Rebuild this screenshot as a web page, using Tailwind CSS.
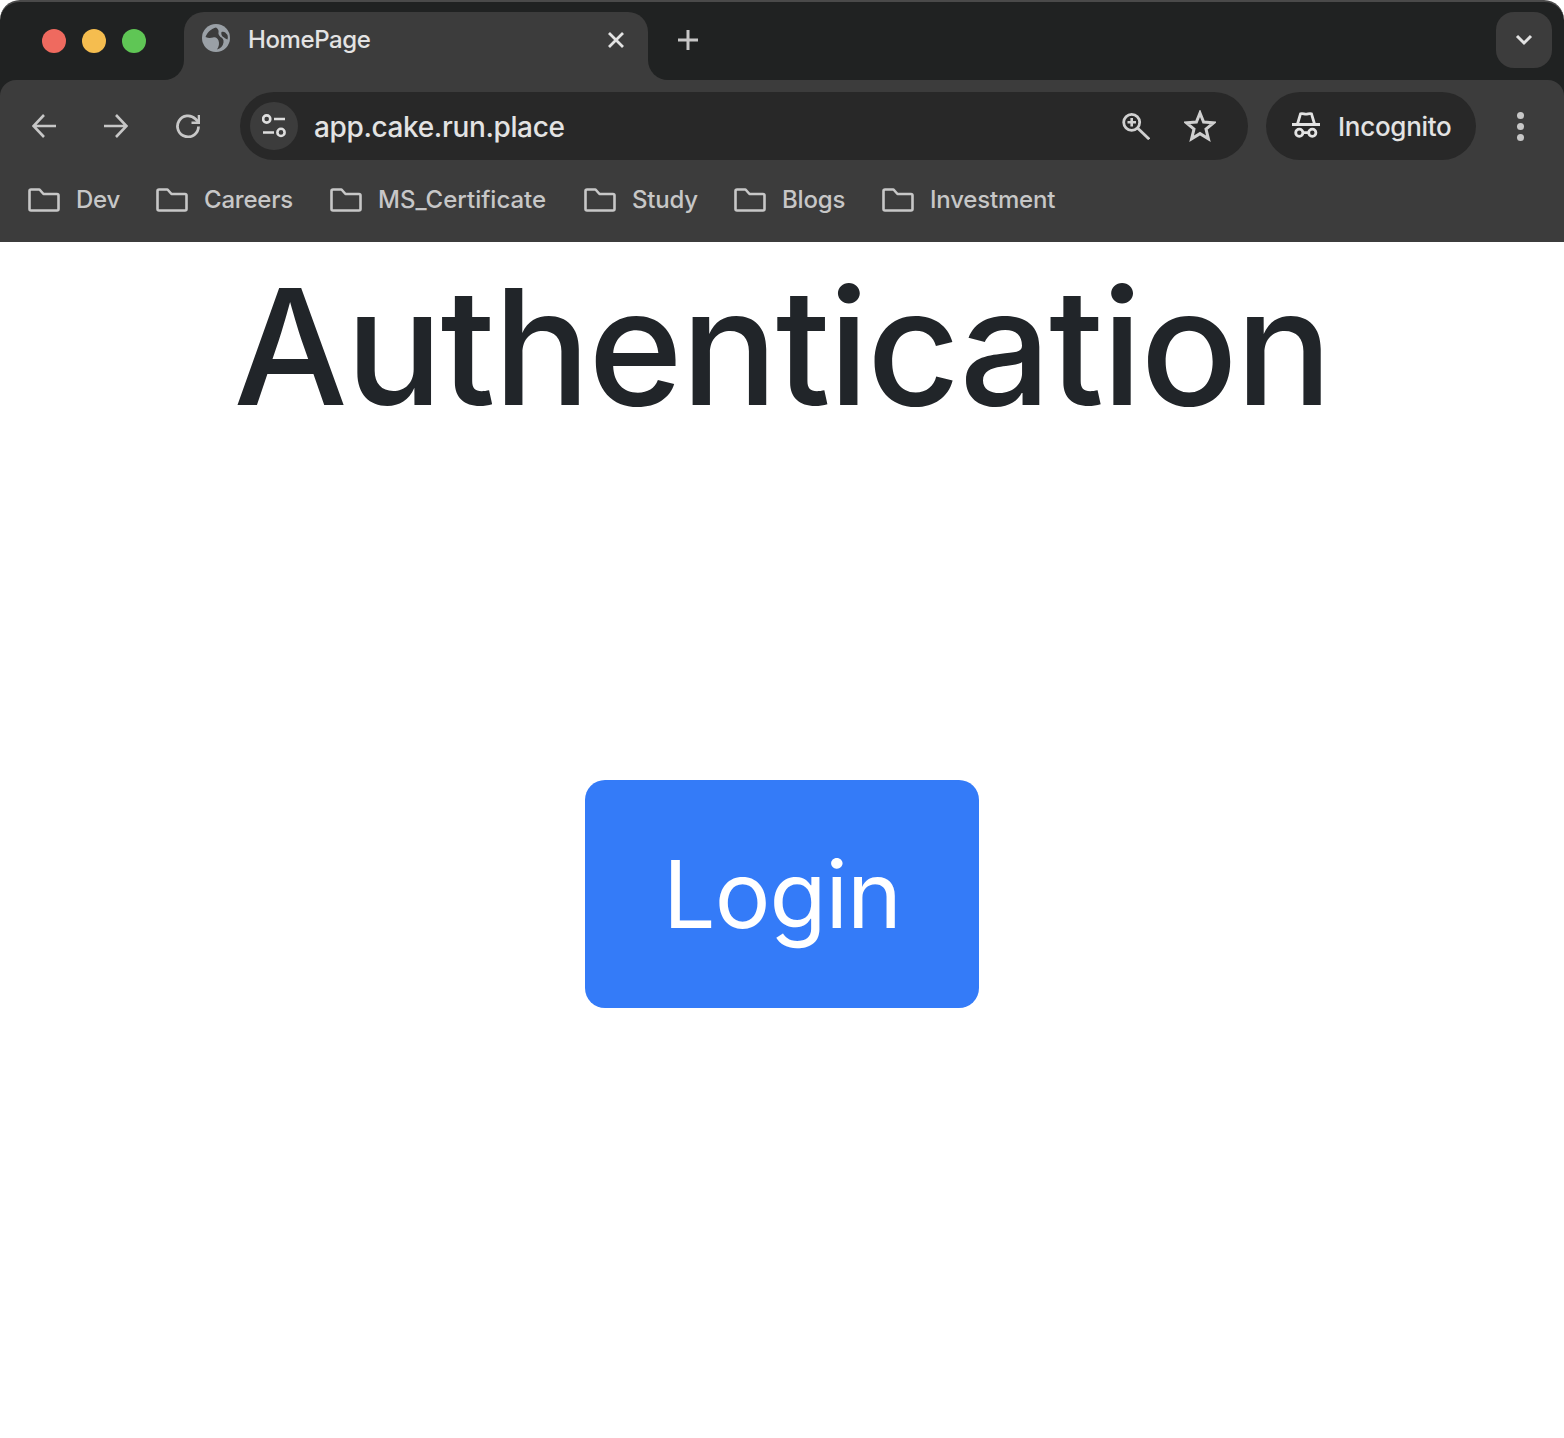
<!DOCTYPE html>
<html lang="en">
<head>
<meta charset="utf-8">
<title>HomePage</title>
<script src="https://cdn.jsdelivr.net/npm/@tailwindcss/browser@4"></script>
</head>
<body class="bg-white font-['Inter',sans-serif] w-[1564px] h-[1438px] overflow-hidden">
<header class="h-[242px] bg-white">
  <div class="h-[242px] rounded-t-[20px] bg-[#202222] border-t-2 border-[#4a4a4a] overflow-hidden flex flex-col font-[450]">
    <!-- tab strip -->
    <div class="h-[78px] flex items-end shrink-0">
      <div class="flex gap-4 self-start mt-[27px] ml-[42px] w-[142px]">
        <span class="w-6 h-6 rounded-full bg-[#ef6a5f] shrink-0"></span>
        <span class="w-6 h-6 rounded-full bg-[#f5bd4f] shrink-0"></span>
        <span class="w-6 h-6 rounded-full bg-[#5fc655] shrink-0"></span>
      </div>
      <div class="relative w-[464px] h-[68px] bg-[#3c3c3c] rounded-t-[20px] flex items-start pt-[12px] pl-[18px] shrink-0">
        <span class="absolute -left-5 bottom-0 w-5 h-5 bg-[#3c3c3c]"><span class="block w-5 h-5 bg-[#202222] rounded-br-[20px]"></span></span>
        <span class="absolute -right-5 bottom-0 w-5 h-5 bg-[#3c3c3c]"><span class="block w-5 h-5 bg-[#202222] rounded-bl-[20px]"></span></span>
        <svg class="w-7 h-7 shrink-0" viewBox="0 0 28 28"><circle cx="14" cy="14" r="14" fill="#9aa0a6"/><path fill="#3c3c3c" d="M14 3.5C9.5 4.5 5.5 8 3.5 13C6.5 14.5 9 14 11 13.5C13.5 12.5 15.5 14 16.5 16.5C17.5 19.5 17 22.5 15 25.5C18.5 24.5 21 22 21.5 18.5C22 15.5 20.5 14 18.5 13C17.5 12 16 10 16.5 8.5C17 6.5 16 4.5 14 3.5Z"/><path fill="#3c3c3c" d="M19.5 8C21.5 7 23.5 8 25.5 11C26 12.5 26 14 25.5 15.5C24 15 22 13.5 20.5 12.5C19.5 11.5 19 9.5 19.5 8Z"/></svg>
        <span class="ml-[18px] text-[24px] leading-[32px] text-[#e3e3e3] tracking-[-0.4px]">HomePage</span>
        <svg class="absolute left-[423px] top-[19px] w-[18px] h-[18px]" viewBox="0 0 18 18" fill="none" stroke="#e3e3e3" stroke-width="2.8"><path d="M2 2 16 16M16 2 2 16"/></svg>
      </div>
      <svg class="self-start mt-[28px] ml-[30px] w-5 h-5 shrink-0" viewBox="0 0 20 20" fill="none" stroke="#c7c7c7" stroke-width="3"><path d="M10 0V20M0 10H20"/></svg>
      <div class="self-start ml-auto mr-[12px] mt-[10px] w-14 h-14 rounded-[18px] bg-[#3c3c3c] flex items-center justify-center">
        <svg class="w-[18px] h-3" viewBox="0 0 18 12" fill="none" stroke="#e3e3e3" stroke-width="3"><path d="M2 2 9 9 16 2"/></svg>
      </div>
    </div>
    <!-- toolbar -->
    <div class="flex-1 bg-[#3c3c3c] rounded-t-[16px] flex flex-col">
      <div class="h-[68px] mt-[12px] flex items-center shrink-0">
        <svg class="ml-[32px] w-6 h-6 shrink-0" viewBox="0 0 24 24" fill="none" stroke="#c7c7c7" stroke-width="2.6"><path d="M24 12H2M12 1 1.5 12 12 23"/></svg>
        <svg class="ml-[48px] w-6 h-6 shrink-0" viewBox="0 0 24 24" fill="none" stroke="#c7c7c7" stroke-width="2.6"><path d="M0 12H22M12 1 22.5 12 12 23"/></svg>
        <svg class="ml-[48px] w-6 h-6 shrink-0" viewBox="0 0 24 24" fill="none" stroke="#c7c7c7" stroke-width="2.8"><path d="M22.5 12.5A10.5 10.5 0 1 1 19.5 5L23 8.5"/><path d="M23 1V8.8H15.5" stroke-width="2.6"/></svg>
        <div class="ml-[40px] w-[1008px] h-[68px] rounded-full bg-[#282828] flex items-center pl-[10px] shrink-0">
          <span class="w-12 h-12 rounded-full bg-[#3c3c3c] flex items-center justify-center shrink-0">
            <svg class="w-6 h-6" viewBox="0 0 24 24" fill="none" stroke="#dedede" stroke-width="2.6"><circle cx="4.7" cy="5" r="3.6"/><path d="M12 5H23M1 18.5H12"/><circle cx="19" cy="18.4" r="3.6"/></svg>
          </span>
          <span class="ml-[16px] text-[28px] leading-9 text-[#e3e3e3] tracking-[-0.37px] relative top-px">app.cake.run.place</span>
          <svg class="ml-auto w-7 h-7 shrink-0" viewBox="0 0 28 28" fill="none" stroke="#d0d0d0" stroke-width="2.8"><circle cx="9.7" cy="10.3" r="8"/><path d="M15.5 16 27.2 27.2"/><path d="M5.5 10.3H14M9.7 6V14.5" stroke-width="2.6"/></svg>
          <svg class="ml-[34px] mr-[32px] w-8 h-8 shrink-0" viewBox="0 0 32 32" fill="none" stroke="#d0d0d0" stroke-width="3" stroke-linejoin="miter"><path d="M16 3 19.6 12 29.5 12.8 22 19 24.4 28.8 16 23.6 7.6 28.8 10 19 2.5 12.8 12.4 12Z"/></svg>
        </div>
        <div class="ml-[18px] w-[210px] h-[68px] rounded-full bg-[#282828] flex items-center pl-[26px] shrink-0">
          <svg class="w-7 h-7 shrink-0" viewBox="0 0 28 28" fill="none" stroke="#e3e3e3" stroke-width="2.8"><path d="M-0.5 12.4H28.7" stroke-width="3"/><path d="M5.5 12 8.5 1.8C11 1.2 12 2.2 14 2.2S17 1.2 19.5 1.8L22.5 12"/><circle cx="7.3" cy="20.7" r="3.6"/><circle cx="20.3" cy="20.7" r="3.6"/><path d="M11 20.7H16.5"/></svg>
          <span class="ml-[18px] text-[26px] leading-9 text-[#e3e3e3] tracking-[-0.28px] relative top-px">Incognito</span>
        </div>
        <span class="ml-[41px] flex flex-col gap-1 shrink-0">
          <span class="w-[7px] h-[7px] rounded-full bg-[#c7c7c7]"></span>
          <span class="w-[7px] h-[7px] rounded-full bg-[#c7c7c7]"></span>
          <span class="w-[7px] h-[7px] rounded-full bg-[#c7c7c7]"></span>
        </span>
      </div>
      <nav class="mt-[26px] ml-[28px] flex items-center h-7 text-[24px] leading-7 text-[#c7c7c7] tracking-[-0.2px]">
        <svg class="w-8 h-6 shrink-0" viewBox="0 0 32 24" fill="none" stroke="#c7c7c7" stroke-width="2.6" stroke-linejoin="round"><path d="M1.5 3Q1.5 1.5 3 1.5H11.5L15.5 6H29Q30.5 6 30.5 7.5V21Q30.5 22.5 29 22.5H3Q1.5 22.5 1.5 21Z"/></svg>
        <span class="ml-[16px] w-[43px]">Dev</span>
        <svg class="ml-[37px] w-8 h-6 shrink-0" viewBox="0 0 32 24" fill="none" stroke="#c7c7c7" stroke-width="2.6" stroke-linejoin="round"><path d="M1.5 3Q1.5 1.5 3 1.5H11.5L15.5 6H29Q30.5 6 30.5 7.5V21Q30.5 22.5 29 22.5H3Q1.5 22.5 1.5 21Z"/></svg>
        <span class="ml-[16px] w-[89px]">Careers</span>
        <svg class="ml-[37px] w-8 h-6 shrink-0" viewBox="0 0 32 24" fill="none" stroke="#c7c7c7" stroke-width="2.6" stroke-linejoin="round"><path d="M1.5 3Q1.5 1.5 3 1.5H11.5L15.5 6H29Q30.5 6 30.5 7.5V21Q30.5 22.5 29 22.5H3Q1.5 22.5 1.5 21Z"/></svg>
        <span class="ml-[16px] w-[169px] tracking-normal">MS_Certificate</span>
        <svg class="ml-[37px] w-8 h-6 shrink-0" viewBox="0 0 32 24" fill="none" stroke="#c7c7c7" stroke-width="2.6" stroke-linejoin="round"><path d="M1.5 3Q1.5 1.5 3 1.5H11.5L15.5 6H29Q30.5 6 30.5 7.5V21Q30.5 22.5 29 22.5H3Q1.5 22.5 1.5 21Z"/></svg>
        <span class="ml-[16px] w-[65px]">Study</span>
        <svg class="ml-[37px] w-8 h-6 shrink-0" viewBox="0 0 32 24" fill="none" stroke="#c7c7c7" stroke-width="2.6" stroke-linejoin="round"><path d="M1.5 3Q1.5 1.5 3 1.5H11.5L15.5 6H29Q30.5 6 30.5 7.5V21Q30.5 22.5 29 22.5H3Q1.5 22.5 1.5 21Z"/></svg>
        <span class="ml-[16px] w-[63px]">Blogs</span>
        <svg class="ml-[37px] w-8 h-6 shrink-0" viewBox="0 0 32 24" fill="none" stroke="#c7c7c7" stroke-width="2.6" stroke-linejoin="round"><path d="M1.5 3Q1.5 1.5 3 1.5H11.5L15.5 6H29Q30.5 6 30.5 7.5V21Q30.5 22.5 29 22.5H3Q1.5 22.5 1.5 21Z"/></svg>
        <span class="ml-[16px]">Investment</span>
      </nav>
    </div>
  </div>
</header>
<main class="flex flex-col items-center">
  <h1 class="mt-[9px] text-[161px] leading-[192px] font-[500] tracking-[-2px] text-[#212529]">Authentication</h1>
  <button class="mt-[337px] w-[394px] h-[228px] rounded-[20px] bg-[#347bf8] text-white text-[93px] leading-none font-[420] tracking-[-1px]">Login</button>
</main>
</body>
</html>
